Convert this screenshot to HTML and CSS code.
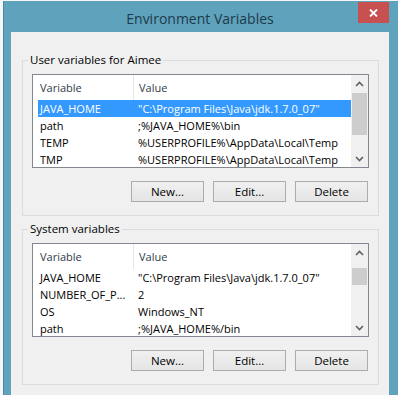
FILE: index.html
```html
<!DOCTYPE html>
<html lang="en">
<head>
    <meta charset="UTF-8">
    <meta name="viewport" content="width=device-width, initial-scale=1.0">
    <title>Environment Variables</title>
    <link rel="stylesheet" href="styles.css">
</head>
<body>
    <div class="window">
        <div class="titlebar">
            <span class="title">Environment Variables</span>
            <button class="close" title="Close">
                <svg width="9" height="8" viewBox="0 0 9 8">
                    <path d="M1 0.5 L8 7.5 M8 0.5 L1 7.5" stroke="#fff" stroke-width="1.8" fill="none"/>
                </svg>
            </button>
        </div>

        <div class="dialog">
            <!-- User variables -->
            <fieldset class="group">
                <legend>User variables for Aimee</legend>
                <div class="list">
                    <div class="list-body">
                        <div class="row header">
                            <span class="col-name">Variable</span>
                            <span class="col-value">Value</span>
                        </div>
                        <div class="row selected">
                            <span class="col-name">JAVA_HOME</span>
                            <span class="col-value">"C:\Program Files\Java\jdk.1.7.0_07"</span>
                        </div>
                        <div class="row">
                            <span class="col-name">path</span>
                            <span class="col-value">;%JAVA_HOME%\bin</span>
                        </div>
                        <div class="row">
                            <span class="col-name">TEMP</span>
                            <span class="col-value">%USERPROFILE%\AppData\Local\Temp</span>
                        </div>
                        <div class="row">
                            <span class="col-name">TMP</span>
                            <span class="col-value">%USERPROFILE%\AppData\Local\Temp</span>
                        </div>
                    </div>
                    <div class="scrollbar">
                        <div class="arrow">
                            <svg width="9" height="6" viewBox="0 0 9 6"><path d="M1 5 L4.5 1.5 L8 5" stroke="#606060" stroke-width="1.6" fill="none"/></svg>
                        </div>
                        <div class="track">
                            <div class="thumb" style="margin-top: 1px; height: 42px;"></div>
                        </div>
                        <div class="arrow">
                            <svg width="9" height="6" viewBox="0 0 9 6"><path d="M1 1 L4.5 4.5 L8 1" stroke="#606060" stroke-width="1.6" fill="none"/></svg>
                        </div>
                    </div>
                </div>
                <div class="buttons">
                    <button class="btn">New...</button>
                    <button class="btn">Edit...</button>
                    <button class="btn">Delete</button>
                </div>
            </fieldset>

            <!-- System variables -->
            <fieldset class="group">
                <legend>System variables</legend>
                <div class="list">
                    <div class="list-body">
                        <div class="row header">
                            <span class="col-name">Variable</span>
                            <span class="col-value">Value</span>
                        </div>
                        <div class="row">
                            <span class="col-name">JAVA_HOME</span>
                            <span class="col-value">"C:\Program Files\Java\jdk.1.7.0_07"</span>
                        </div>
                        <div class="row">
                            <span class="col-name">NUMBER_OF_P...</span>
                            <span class="col-value">2</span>
                        </div>
                        <div class="row">
                            <span class="col-name">OS</span>
                            <span class="col-value">Windows_NT</span>
                        </div>
                        <div class="row">
                            <span class="col-name">path</span>
                            <span class="col-value">;%JAVA_HOME%/bin</span>
                        </div>
                    </div>
                    <div class="scrollbar">
                        <div class="arrow">
                            <svg width="9" height="6" viewBox="0 0 9 6"><path d="M1 5 L4.5 1.5 L8 5" stroke="#606060" stroke-width="1.6" fill="none"/></svg>
                        </div>
                        <div class="track">
                            <div class="thumb" style="margin-top: 7px; height: 17px;"></div>
                        </div>
                        <div class="arrow">
                            <svg width="9" height="6" viewBox="0 0 9 6"><path d="M1 1 L4.5 4.5 L8 1" stroke="#606060" stroke-width="1.6" fill="none"/></svg>
                        </div>
                    </div>
                </div>
                <div class="buttons">
                    <button class="btn">New...</button>
                    <button class="btn">Edit...</button>
                    <button class="btn">Delete</button>
                </div>
            </fieldset>
        </div>
    </div>
</body>
</html>
```

FILE: styles.css
```css
body {
    margin: 0;
    padding: 1px 0 0 3px;
    background-color: #f4f6f7;
    font-family: "Open Sans", "Noto Sans", sans-serif;
    font-size: 11px;
    color: #000;
    overflow: hidden;
}
.window {
    width: 378px;
    height: 394px;
    display: flex;
    flex-direction: column;
    background-color: #5fa2bb;
    border-left: 1px solid #4a8aa3;
    padding: 0 9px 0 7px;
}
.titlebar {
    height: 31px;
    display: grid;
    grid-template-columns: 1fr auto 1fr;
}
.title {
    grid-column: 2;
    align-self: center;
    margin-top: 3px;
    font-size: 14px;
    color: #1d3a4c;
}
.close {
    grid-column: 3;
    justify-self: end;
    align-self: start;
    width: 31px;
    height: 21px;
    margin-top: 1px;
    border: none;
    padding: 0;
    background-color: #c75050;
    display: flex;
    align-items: center;
    justify-content: center;
}
.dialog {
    flex: 1;
    background-color: #f0f0f0;
    padding: 20px 10px 0 11px;
}
.group {
    margin: 0;
    padding: 6px 9px 13px 9px;
    border: 1px solid #dcdcdc;
    min-width: 0;
}
.group + .group {
    margin-top: 5px;
}
.group legend {
    padding: 0 2px;
    margin-left: -4px;
    line-height: 16px;
    font-size: 11.5px;
    color: #000;
}
.list {
    height: 92px;
    display: flex;
    border: 1px solid #828790;
    background-color: #fff;
    overflow: hidden;
}
.list-body {
    flex: 1;
    padding-left: 5px;
    overflow: hidden;
}
.row {
    display: flex;
    height: 17px;
    line-height: 17px;
    white-space: nowrap;
}
.row.header {
    height: 25px;
    line-height: 25px;
    color: #2e3b4a;
}
.row.header .col-name {
    border-right: 1px solid #e5e5e5;
}
.row.selected {
    background-color: #3399ff;
    color: #fff;
}
.col-name {
    width: 93px;
    padding-left: 2px;
    flex-shrink: 0;
    overflow: hidden;
}
.col-value {
    padding-left: 5px;
    overflow: hidden;
}
.scrollbar {
    width: 17px;
    display: flex;
    flex-direction: column;
    background-color: #f0f0f0;
}
.arrow {
    height: 17px;
    display: flex;
    align-items: center;
    justify-content: center;
}
.track {
    flex: 1;
    padding: 0 1px;
}
.thumb {
    background-color: #cdcdcd;
}
.buttons {
    display: flex;
    justify-content: flex-end;
    gap: 9px;
    margin-top: 13px;
    padding-right: 1px;
}
.btn {
    width: 73px;
    height: 21px;
    padding: 0;
    border: 1px solid #acacac;
    background: linear-gradient(#f0f0f0, #e5e5e5);
    font-family: "Open Sans", "Noto Sans", sans-serif;
    font-size: 11.5px;
    color: #000;
}
```
